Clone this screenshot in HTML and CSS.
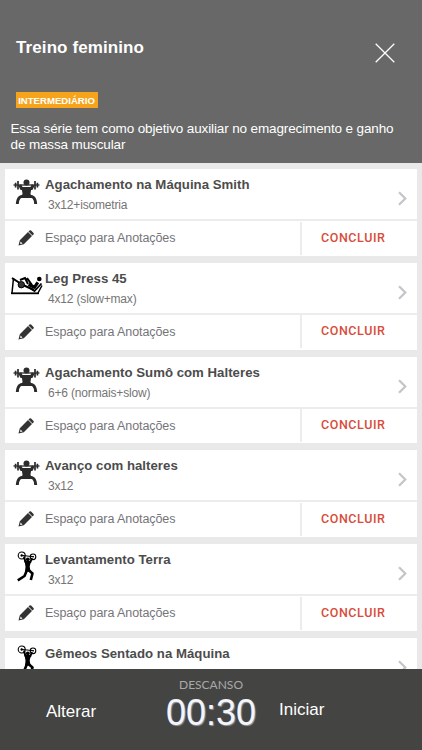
FILE: index.html
```
<!DOCTYPE html>
<html lang="pt-BR">

<head>
  <meta charset="UTF-8">
  <meta name="viewport" content="width=device-width, initial-scale=1.0">
  <title>Treino feminino</title>
  <link rel="stylesheet" href="styles.css">
</head>

<body>
  <svg class="sprite" aria-hidden="true">
    <symbol id="icon-squat" viewBox="0 0 28 26">
      <g fill="none" stroke="#2b2b2b" stroke-linejoin="round">
        <path stroke-width="1.3" d="M.5 6h26" />
        <path stroke-width="1.7" d="M2.600 3.800v4.600M5 2v8.500M22 2v8.500M24.400 3.800v4.600" />
        <path stroke-width="3" d="M6.800 6l1.700 3.500h10L20.200 6" />
        <path stroke-width="3" d="M12 17.500c-5-.8-7.200 1-7.700 7.500M15 17.500c5-.8 7.200 1 7.700 7.500" />
      </g>
      <circle cx="13.500" cy="3.600" r="3" fill="#2b2b2b" />
      <path fill="#2b2b2b" d="M8 8h11l-1 3.500-.5 3 1 4.500h-10l1-4.500-.5-3z" />
    </symbol>
    <symbol id="icon-legpress" viewBox="0 0 32 20">
      <g fill="none" stroke="#000">
        <path stroke-width="1.800" d="M0 17.300h28" />
        <path stroke-width="1.500" d="M2.500 2L1 17M27 17l4-7.500" />
        <path stroke-width="2" d="M1 2l11 7 11 5" />
        <path stroke-width="2" d="M9 4l5-2 3 6M16 2l5 7" />
        <path stroke-width="1.800" d="M19 12l4.500 3 7-7.500" />
        <path stroke-width="3.200" d="M17.500 8.500l6 2.800 3.300-5" />
      </g>
      <circle cx="10.300" cy="8.700" r="3.200" fill="#333" stroke="#000" />
      <circle cx="28.300" cy="3" r="2.300" />
    </symbol>
    <symbol id="icon-lift" viewBox="0 0 20 31">
      <g fill="none" stroke="#000">
        <circle cx="4.700" cy="4.500" r="3.500" stroke-width="1.100" />
        <circle cx="16" cy="5.800" r="2.800" stroke-width="1.100" />
        <path stroke-width="1" d="M4 4.300l13 1.500" />
        <path stroke-width="2" d="M7 5.500l1.500 6M15 7l-2 5" />
        <path stroke-width="2.600" stroke-linejoin="round" d="M10 19l-2.500 6L.8 29.300M11.500 19l4 3.500-1.700 6.500" />
      </g>
      <circle cx="4.700" cy="4.500" r="1.200" />
      <circle cx="16" cy="5.800" r=".7" />
      <circle cx="10.800" cy="8.300" r="1.900" />
      <path d="M7.500 9.500l6.500.5-1.300 5.500.8 5-5.500.2.500-5z" />
    </symbol>
    <symbol id="icon-pencil" viewBox="0 0 16 16">
      <path fill="#333" d="M.5 15.500l1.300-5.300L10 2l4 4L5.800 14.200z M10.500 1.500l1-1q.8-.7 1.600 0l2.400 2.400q.7.8 0 1.600l-1 1z" />
      <path fill="#fff" d="M2.600 11.500l1.900 1.900-1.900.5-.5-.5z" />
    </symbol>
    <symbol id="icon-chevron" viewBox="0 0 10 15">
      <path fill="none" stroke="#c4c4c9" stroke-width="2.200" d="M1 1.200L7.300 7.500 1 13.800" />
    </symbol>
  </svg>

  <header class="workout-header">
    <div class="title-row">
      <h1>Treino feminino</h1>
      <svg class="close" width="20" height="20" viewBox="0 0 20 20">
        <path fill="none" stroke="#fff" stroke-width="1.300" d="M.7.700l18.600 18.600M19.300.700L.7 19.300" />
      </svg>
    </div>
    <span class="level">INTERMEDIÁRIO</span>
    <p>Essa série tem como objetivo auxiliar no emagrecimento e ganho<br>de massa muscular</p>
  </header>

  <main class="exercise-list">
    <section class="card">
      <div class="exercise">
        <svg class="icon squat"><use href="#icon-squat" /></svg>
        <div class="info">
          <h2>Agachamento na Máquina Smith</h2>
          <p>3x12+isometria</p>
        </div>
        <svg class="chevron"><use href="#icon-chevron" /></svg>
      </div>
      <div class="actions">
        <svg class="pencil"><use href="#icon-pencil" /></svg>
        <span class="notes">Espaço para Anotações</span>
        <span class="done">CONCLUIR</span>
      </div>
    </section>
    <section class="card">
      <div class="exercise">
        <svg class="icon legpress"><use href="#icon-legpress" /></svg>
        <div class="info">
          <h2>Leg Press 45</h2>
          <p>4x12 (slow+max)</p>
        </div>
        <svg class="chevron"><use href="#icon-chevron" /></svg>
      </div>
      <div class="actions">
        <svg class="pencil"><use href="#icon-pencil" /></svg>
        <span class="notes">Espaço para Anotações</span>
        <span class="done">CONCLUIR</span>
      </div>
    </section>
    <section class="card">
      <div class="exercise">
        <svg class="icon squat"><use href="#icon-squat" /></svg>
        <div class="info">
          <h2>Agachamento Sumô com Halteres</h2>
          <p>6+6 (normais+slow)</p>
        </div>
        <svg class="chevron"><use href="#icon-chevron" /></svg>
      </div>
      <div class="actions">
        <svg class="pencil"><use href="#icon-pencil" /></svg>
        <span class="notes">Espaço para Anotações</span>
        <span class="done">CONCLUIR</span>
      </div>
    </section>
    <section class="card">
      <div class="exercise">
        <svg class="icon squat"><use href="#icon-squat" /></svg>
        <div class="info">
          <h2>Avanço com halteres</h2>
          <p>3x12</p>
        </div>
        <svg class="chevron"><use href="#icon-chevron" /></svg>
      </div>
      <div class="actions">
        <svg class="pencil"><use href="#icon-pencil" /></svg>
        <span class="notes">Espaço para Anotações</span>
        <span class="done">CONCLUIR</span>
      </div>
    </section>
    <section class="card">
      <div class="exercise">
        <svg class="icon lift"><use href="#icon-lift" /></svg>
        <div class="info">
          <h2>Levantamento Terra</h2>
          <p>3x12</p>
        </div>
        <svg class="chevron"><use href="#icon-chevron" /></svg>
      </div>
      <div class="actions">
        <svg class="pencil"><use href="#icon-pencil" /></svg>
        <span class="notes">Espaço para Anotações</span>
        <span class="done">CONCLUIR</span>
      </div>
    </section>
    <section class="card">
      <div class="exercise">
        <svg class="icon lift"><use href="#icon-lift" /></svg>
        <div class="info">
          <h2>Gêmeos Sentado na Máquina</h2>
        </div>
        <svg class="chevron"><use href="#icon-chevron" /></svg>
      </div>
    </section>
  </main>

  <footer class="timer">
    <span class="change">Alterar</span>
    <div class="clock">
      <span class="rest">DESCANSO</span>
      <span class="time">00:30</span>
    </div>
    <span class="start">Iniciar</span>
  </footer>
</body>

</html>
```
FILE: styles.css
```
* {
  box-sizing: border-box;
}

body {
  margin: 0;
  height: 750px;
  display: flex;
  flex-direction: column;
  overflow: hidden;
  background-color: #e9e9e9;
  font-family: "Liberation Sans", Arial, sans-serif;
}

h1,
h2,
p {
  margin: 0;
}

.sprite {
  display: none;
}

.workout-header {
  flex: none;
  height: 163px;
  padding: 36px 0 0 10.5px;
  background-color: #676867;
  color: #fff;
}

.title-row {
  height: 56px;
  display: flex;
  justify-content: space-between;
  align-items: flex-start;
  padding: 0 27px 0 5.5px;
}

.title-row h1 {
  font-size: 17px;
  letter-spacing: 0.1px;
  line-height: 24px;
}

.close {
  margin-top: 6.5px;
}

.level {
  display: block;
  width: 82px;
  height: 16px;
  margin-left: 5px;
  background-color: #f7a41d;
  font-size: 9.6px;
  font-weight: bold;
  line-height: 17px;
  text-align: center;
  white-space: nowrap;
}

.workout-header p {
  margin-top: 13px;
  font-size: 13.5px;
  letter-spacing: -0.13px;
  line-height: 15.5px;
  white-space: nowrap;
}

.exercise-list {
  flex: 1;
  min-height: 0;
  overflow: hidden;
  display: flex;
  flex-direction: column;
  gap: 7px;
  padding: 6.3px 5.5px 0 5px;
}

.card {
  flex: none;
  height: 86.7px;
  background-color: #fff;
}

.exercise {
  height: 52px;
  display: flex;
  border-bottom: 2px solid #ececef;
}

.icon {
  flex: none;
}

.squat {
  width: 28px;
  height: 26px;
  margin: 10px 4px 0 8px;
}

.legpress {
  width: 32px;
  height: 20px;
  margin: 13.5px 2px 0 6px;
}

.lift {
  width: 20px;
  height: 31px;
  margin: 7px 8px 0 12px;
}

.info {
  flex: 1;
  padding-top: 7px;
  white-space: nowrap;
}

.info h2 {
  color: #4c4c4c;
  font-size: 13.2px;
  letter-spacing: 0.03px;
  line-height: 18px;
}

.info p {
  padding: 4px 0 0 3px;
  color: #757575;
  font-size: 12px;
  letter-spacing: -0.17px;
  line-height: 15px;
}

.chevron {
  width: 10px;
  height: 15px;
  margin: 22px 9px 0 0;
}

.actions {
  height: 34px;
  display: flex;
  align-items: center;
}

.pencil {
  width: 16px;
  height: 16px;
  margin: 0 11px 0 13px;
}

.notes {
  flex: 1;
  color: #757579;
  font-size: 12.5px;
  letter-spacing: -0.08px;
}

.done {
  width: 116.5px;
  height: 33px;
  padding-right: 12px;
  border-left: 2px solid #ececef;
  color: #d84c3a;
  font-family: Roboto, sans-serif;
  font-size: 12.5px;
  font-weight: 500;
  letter-spacing: 0.6px;
  line-height: 32px;
  text-align: center;
}

.timer {
  flex: none;
  height: 81px;
  display: flex;
  background-color: #444443;
  color: #fff;
  font-size: 17px;
}

.change {
  width: 160px;
  padding: 33px 0 0 46px;
}

.clock {
  width: 102px;
  display: flex;
  flex-direction: column;
  align-items: center;
}

.rest {
  margin-top: 8px;
  color: #a9a9a9;
  font-family: Lato, sans-serif;
  font-size: 12px;
  line-height: 15px;
}

.time {
  color: #f4f4fa;
  font-size: 36px;
  line-height: 42px;
  text-shadow: 1px 1px 1px #999;
}

.start {
  padding: 31px 0 0 17px;
}
```
